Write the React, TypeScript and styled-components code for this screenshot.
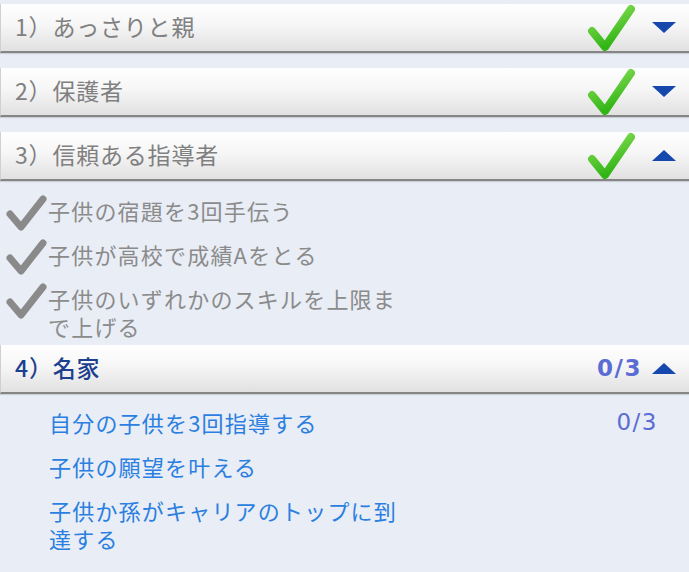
import React from "react"
import styled, { createGlobalStyle } from "styled-components"

const GlobalStyle = createGlobalStyle`
  html, body {
    margin: 0;
    padding: 0;
    background: #e9edf5;
  }
  body {
    font-family: "Noto Sans CJK JP", "Noto Sans", sans-serif;
  }
`

interface Task {
  label: string
  count?: string
}

interface Stage {
  num: number
  title: string
  done: boolean
  open: boolean
  count?: string
  tasks: Task[]
}

const stages: Stage[] = [
  { num: 1, title: "あっさりと親", done: true, open: false, tasks: [] },
  { num: 2, title: "保護者", done: true, open: false, tasks: [] },
  {
    num: 3,
    title: "信頼ある指導者",
    done: true,
    open: true,
    tasks: [
      { label: "子供の宿題を3回手伝う" },
      { label: "子供が高校で成績Aをとる" },
      { label: "子供のいずれかのスキルを上限まで上げる" },
    ],
  },
  {
    num: 4,
    title: "名家",
    done: false,
    open: true,
    count: "0/3",
    tasks: [
      { label: "自分の子供を3回指導する", count: "0/3" },
      { label: "子供の願望を叶える" },
      { label: "子供か孫がキャリアのトップに到達する" },
    ],
  },
]

const Page = styled.div`
  width: 689px;
  min-height: 572px;
  padding-top: 4px;
  box-sizing: border-box;
  background: #e9edf5;
  display: flex;
  flex-direction: column;
`

const Section = styled.section<{ $open: boolean }>`
  display: flex;
  flex-direction: column;
  margin-bottom: ${p => (p.$open ? 0 : 15)}px;
`

const Header = styled.div`
  height: 47px;
  display: flex;
  align-items: center;
  padding: 0 14px 0 14px;
  background: linear-gradient(to bottom, #ffffff 0%, #f6f6f6 45%, #e1e1e1 100%);
  border-left: 1px solid #d0d0d0;
  border-bottom: 2px solid #858585;
  box-shadow: 0 1px 1px rgba(0, 0, 0, 0.12);
`

const Title = styled.div<{ $active: boolean }>`
  flex: 1;
  font-size: 23px;
  margin-top: -3px;
  color: ${p => (p.$active ? "#1c3f8e" : "#808080")};
  font-weight: ${p => (p.$active ? 500 : 400)};
  letter-spacing: 0.8px;
  white-space: nowrap;
`

const HeaderCount = styled.div`
  font-family: "DejaVu Sans", sans-serif;
  font-size: 23px;
  font-weight: 700;
  letter-spacing: 1.5px;
  color: #5b6cd4;
  margin-right: 10px;
  margin-top: -2px;
`

const BigCheck = styled.svg`
  width: 48px;
  height: 48px;
  margin-right: 17px;
  margin-top: 1px;
`

const Arrow = styled.svg`
  width: 24px;
  height: 11px;
  margin-right: -1px;
`

const Body = styled.div<{ $done: boolean }>`
  display: flex;
  flex-direction: column;
  gap: 16px;
  padding: ${p => (p.$done ? "15px 0 5px 5px" : "14px 0 20px 49px")};
`

const TaskRow = styled.div`
  display: flex;
  align-items: flex-start;
`

const SmallCheck = styled.svg`
  width: 42px;
  height: 38px;
  flex: none;
  margin: -2px 1px -10px 0;
`

const TaskLabel = styled.div<{ $done: boolean }>`
  width: 362px;
  font-size: 22px;
  line-height: 28px;
  letter-spacing: 1.2px;
  color: ${p => (p.$done ? "#8b8b8b" : "#2b7fe0")};
`

const TaskCount = styled.div`
  margin-left: auto;
  margin-right: 31px;
  font-family: "DejaVu Sans", sans-serif;
  font-size: 23px;
  line-height: 28px;
  letter-spacing: 1.5px;
  color: #5b6cd4;
`

function GreenCheck() {
  return (
    <BigCheck viewBox="0 0 48 48">
      <defs>
        <linearGradient id="gc" x1="0" y1="0" x2="0.4" y2="1">
          <stop offset="0" stopColor="#8ee05a" />
          <stop offset="1" stopColor="#2fb414" />
        </linearGradient>
      </defs>
      <path
        d="M5 27 L18 43 L44 5"
        fill="none"
        stroke="url(#gc)"
        strokeWidth="8"
        strokeLinecap="round"
        strokeLinejoin="round"
      />
    </BigCheck>
  )
}

function GrayCheck() {
  return (
    <SmallCheck viewBox="0 0 42 38">
      <path
        d="M5 20 L16 33 L38 5"
        fill="none"
        stroke="#8a8a8a"
        strokeWidth="7"
        strokeLinecap="round"
        strokeLinejoin="round"
      />
    </SmallCheck>
  )
}

function Triangle({ up }: { up: boolean }) {
  return (
    <Arrow viewBox="0 0 24 11">
      <polygon points={up ? "12,0 24,11 0,11" : "0,0 24,0 12,11"} fill="#1547ad" />
    </Arrow>
  )
}

export default function App() {
  return (
    <>
      <GlobalStyle />
      <Page>
        {stages.map(s => (
          <Section key={s.num} $open={s.open}>
            <Header>
              <Title $active={!s.done}>
                {s.num}）{s.title}
              </Title>
              {s.count && <HeaderCount>{s.count}</HeaderCount>}
              {s.done && <GreenCheck />}
              <Triangle up={s.open} />
            </Header>
            {s.open && (
              <Body $done={s.done}>
                {s.tasks.map(t => (
                  <TaskRow key={t.label}>
                    {s.done && <GrayCheck />}
                    <TaskLabel $done={s.done}>{t.label}</TaskLabel>
                    {t.count && <TaskCount>{t.count}</TaskCount>}
                  </TaskRow>
                ))}
              </Body>
            )}
          </Section>
        ))}
      </Page>
    </>
  )
}
